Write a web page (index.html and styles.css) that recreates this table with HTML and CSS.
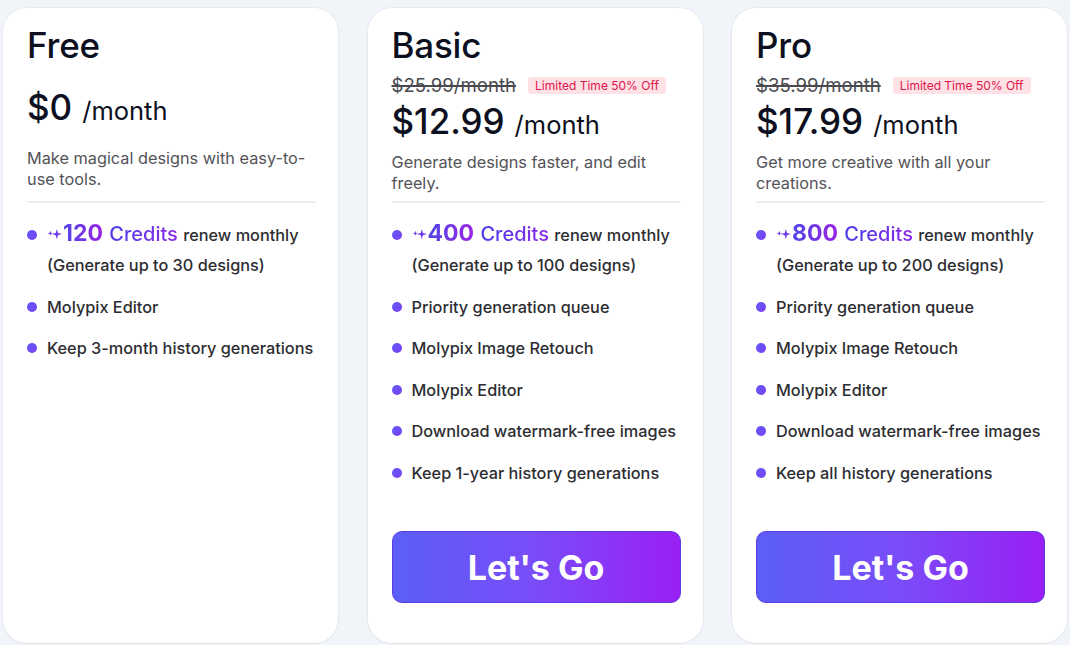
FILE: index.html
```html
<!DOCTYPE html>
<html lang="en">
<head>
<meta charset="utf-8">
<title>Pricing</title>
<link rel="stylesheet" href="styles.css">
</head>
<body>
<svg width="0" height="0" class="defs" aria-hidden="true">
  <defs>
    <linearGradient id="spark" x1="0" y1="0" x2="1" y2="1">
      <stop offset="0" stop-color="#4f46e5"/>
      <stop offset="1" stop-color="#8b2cf0"/>
    </linearGradient>
  </defs>
</svg>
<main class="plans">
  <section class="card">
    <div class="head">
      <h2 class="title">Free</h2>
      <div class="price price-free"><span class="amount">$0</span><span class="per">/month</span></div>
      <p class="desc desc-free">Make magical designs with easy-to-use tools.</p>
    </div>
    <hr class="rule">
    <ul class="features">
      <li><span class="credits"><svg class="sparkle" viewBox="0 0 16 16" width="15" height="15"><path fill="url(#spark)" d="M3.5 4 L4.2 6 L6.2 6.7 L4.2 7.4 L3.5 9.4 L2.8 7.4 L0.8 6.7 L2.8 6 Z"/><path fill="url(#spark)" d="M10.5 2 L11.7 6.3 L15.8 7.5 L11.7 8.7 L10.5 13 L9.3 8.7 L5.2 7.5 L9.3 6.3 Z"/></svg><b class="num">120</b> <span class="cr">Credits</span></span> renew monthly (Generate up to 30 designs)</li>
      <li>Molypix Editor</li>
      <li>Keep 3-month history generations</li>
    </ul>
  </section>

  <section class="card">
    <div class="head">
      <h2 class="title">Basic</h2>
      <div class="was"><s class="old">$25.99/month</s><span class="badge">Limited Time 50% Off</span></div>
      <div class="price"><span class="amount">$12.99</span><span class="per">/month</span></div>
      <p class="desc">Generate designs faster, and edit freely.</p>
    </div>
    <hr class="rule">
    <ul class="features">
      <li><span class="credits"><svg class="sparkle" viewBox="0 0 16 16" width="15" height="15"><path fill="url(#spark)" d="M3.5 4 L4.2 6 L6.2 6.7 L4.2 7.4 L3.5 9.4 L2.8 7.4 L0.8 6.7 L2.8 6 Z"/><path fill="url(#spark)" d="M10.5 2 L11.7 6.3 L15.8 7.5 L11.7 8.7 L10.5 13 L9.3 8.7 L5.2 7.5 L9.3 6.3 Z"/></svg><b class="num">400</b> <span class="cr">Credits</span></span> renew monthly (Generate up to 100 designs)</li>
      <li>Priority generation queue</li>
      <li>Molypix Image Retouch</li>
      <li>Molypix Editor</li>
      <li>Download watermark-free images</li>
      <li>Keep 1-year history generations</li>
    </ul>
    <button class="go">Let's Go</button>
  </section>

  <section class="card">
    <div class="head">
      <h2 class="title">Pro</h2>
      <div class="was"><s class="old">$35.99/month</s><span class="badge">Limited Time 50% Off</span></div>
      <div class="price"><span class="amount">$17.99</span><span class="per">/month</span></div>
      <p class="desc">Get more creative with all your creations.</p>
    </div>
    <hr class="rule">
    <ul class="features">
      <li><span class="credits"><svg class="sparkle" viewBox="0 0 16 16" width="15" height="15"><path fill="url(#spark)" d="M3.5 4 L4.2 6 L6.2 6.7 L4.2 7.4 L3.5 9.4 L2.8 7.4 L0.8 6.7 L2.8 6 Z"/><path fill="url(#spark)" d="M10.5 2 L11.7 6.3 L15.8 7.5 L11.7 8.7 L10.5 13 L9.3 8.7 L5.2 7.5 L9.3 6.3 Z"/></svg><b class="num">800</b> <span class="cr">Credits</span></span> renew monthly (Generate up to 200 designs)</li>
      <li>Priority generation queue</li>
      <li>Molypix Image Retouch</li>
      <li>Molypix Editor</li>
      <li>Download watermark-free images</li>
      <li>Keep all history generations</li>
    </ul>
    <button class="go">Let's Go</button>
  </section>
</main>
</body>
</html>
```

FILE: styles.css
```css
* { box-sizing: border-box; }
html, body { margin: 0; padding: 0; }
body {
  background: #f1f4f9;
  font-family: Inter, "Noto Sans", sans-serif;
  color: #2b2b2f;
  overflow: hidden;
  height: 645px;
}
.defs { position: absolute; }
.plans {
  display: grid;
  grid-template-columns: 335px 335px 335px;
  column-gap: 29.5px;
  padding: 8px 0 0 3px;
}
.card {
  background: #fff;
  border-radius: 24px;
  height: 635px;
  padding: 17px 22px 40px 24px;
  display: flex;
  flex-direction: column;
  box-shadow: 0 0 0 1px rgba(20, 30, 60, 0.035), 0 1px 3px rgba(20, 30, 60, 0.04);
}
.head {
  height: 176px;
  display: flex;
  flex-direction: column;
}
.title {
  margin: 0;
  font-size: 35px;
  line-height: 41px;
  font-weight: 500;
  color: #0d1020;
  letter-spacing: -0.2px;
}
.was {
  display: flex;
  align-items: center;
  gap: 12px;
  margin-top: 7px;
  height: 24px;
}
.old {
  font-size: 18.6px;
  color: #4a4a50;
  text-decoration: line-through;
  text-decoration-thickness: 1.5px;
}
.badge {
  background: #fde1e5;
  color: #e0144c;
  font-size: 12px;
  line-height: 17px;
  padding: 0 7px;
  border-radius: 3px;
}
.price {
  display: flex;
  align-items: baseline;
  gap: 10px;
  margin-top: 4px;
  line-height: 41px;
  color: #0d1020;
}
.price-free { margin-top: 21px; }
.amount { font-size: 35px; font-weight: 500; }
.per { font-size: 25.5px; font-weight: 400; }
.desc {
  margin: auto 0 0;
  font-size: 16.3px;
  line-height: 21px;
  color: #535358;
  padding-bottom: 7px;
}
.desc-free { padding-bottom: 11px; }
.rule {
  margin: 0;
  border: 0;
  height: 2px;
  background: #ececee;
  border-radius: 1px;
}
.features {
  list-style: none;
  margin: 17px 0 0;
  padding: 0;
}
.features li {
  position: relative;
  padding-left: 20px;
  font-size: 16.3px;
  line-height: 30px;
  font-weight: 500;
  color: #2d2d32;
  margin-bottom: 11.5px;
}
.features li::before {
  content: "";
  position: absolute;
  left: 0;
  top: 10px;
  width: 10px;
  height: 10px;
  border-radius: 50%;
  background: linear-gradient(135deg, #5f5cf7, #7b3ff2);
}
.credits { white-space: nowrap; margin-right: 1px; }
.sparkle { vertical-align: -1px; margin-right: 1px; }
.num {
  font-size: 23px;
  line-height: 1;
  font-weight: 700;
  background: linear-gradient(90deg, #4f46e5, #9a24e6);
  -webkit-background-clip: text;
  background-clip: text;
  color: transparent;
}
.cr {
  font-size: 20px;
  line-height: 1;
  font-weight: 500;
  margin-left: 2px;
  background: linear-gradient(90deg, #4b3ee8, #8a2ae6);
  -webkit-background-clip: text;
  background-clip: text;
  color: transparent;
}
.go {
  margin-top: auto;
  height: 72px;
  width: 100%;
  border: 1px solid #5b3be0;
  border-radius: 10px;
  background: linear-gradient(90deg, #5b5ff7 0%, #7a4cf8 50%, #9a1ff4 100%);
  color: #fff;
  font-family: Inter, "Noto Sans", sans-serif;
  font-size: 34px;
  font-weight: 700;
  cursor: pointer;
}
```
